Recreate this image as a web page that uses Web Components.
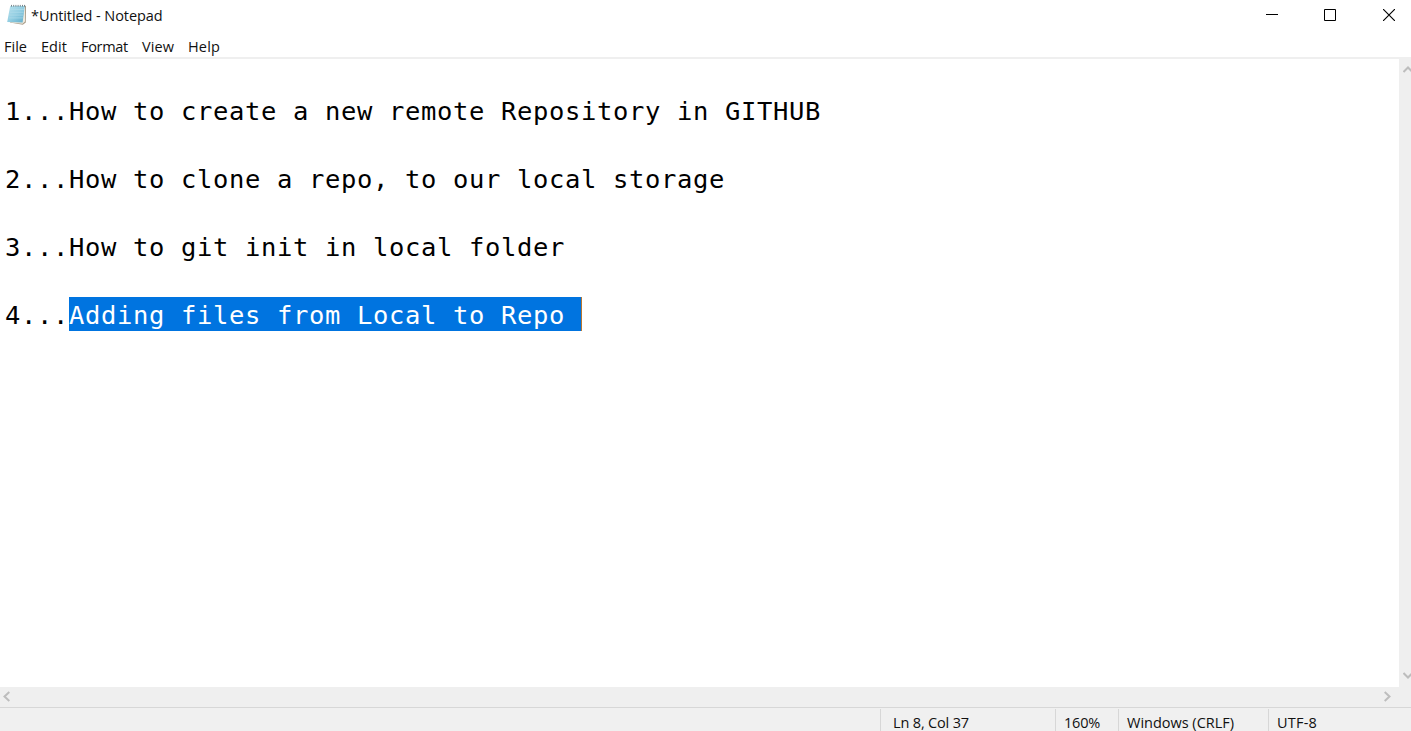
<!DOCTYPE html>
<html lang="en">
<head>
<meta charset="utf-8">
<title>*Untitled - Notepad</title>
<style>
html, body { margin: 0; height: 100%; overflow: hidden; background: #fff; }
body { font: 14.5px/20px "Open Sans", "Noto Sans", sans-serif; color: #111; }
</style>
</head>
<body>
<notepad-window></notepad-window>
<script>
const define = (name, html, setup) => customElements.define(name, class extends HTMLElement {
  constructor() {
    super();
    this.attachShadow({ mode: "open" }).innerHTML = html;
  }
  connectedCallback() { if (setup) setup(this); }
});

// A label whose letter spacing is tuned so that it takes the given width.
define("ui-label", `<style>:host{display:block;white-space:pre}span{display:inline-block}</style><span><slot></slot></span>`, el => {
  const span = el.shadowRoot.querySelector("span");
  const target = Number(el.getAttribute("width"));
  const gap = (target - span.getBoundingClientRect().width) / el.textContent.length;
  span.style.letterSpacing = gap.toFixed(3) + "px";
});

define("notepad-icon", `<style>:host{display:block;width:20px;height:22px}svg{display:block}</style>
<svg width="20" height="22" viewBox="0 0 20 22">
  <defs><linearGradient id="g" x1="0" y1="0" x2="1" y2="1"><stop offset="0" stop-color="#b9e2ee"/><stop offset=".5" stop-color="#93cee2"/><stop offset="1" stop-color="#5eabc9"/></linearGradient></defs>
  <path d="M3 18.6 15.8 20.7 18.8 18.6 19 2 17.4 1.5z" fill="#a89c89"/>
  <path d="M4 18.6 15.6 19.8 18 17.4V2.6z" fill="#eee9dd"/>
  <path d="M3.2 2H17.8L15.6 18.6.2 18z" fill="url(#g)"/>
  <path d="M3 5.5H17M2.6 8.3H16.6M2.2 11.1H16.3M1.8 13.9H15.9" stroke="#b4deeb" stroke-width=".6"/>
  <path d="M4.5.9v1.8M6.7.9v1.8M8.9.9v1.8M11.1.9v1.8M13.3.9v1.8M15.5.9v1.8M17.5.9v1.8" stroke="#75858b" stroke-width="1"/>
</svg>`);

define("title-bar", `<style>
:host{display:flex;height:32px;background:#fff}
notepad-icon{margin:4px 0 0 7px}
ui-label{margin:6px 0 0 4px;flex:1}
svg{display:block;margin-top:9px;flex:none;fill:none;stroke:#000}
.min{margin-right:46px}.max{margin-right:47px}.close{margin-right:16px}
</style>
<notepad-icon></notepad-icon><ui-label width="131.5">*Untitled - Notepad</ui-label>
<svg class="min" width="12" height="12"><path d="M0 5.5H12"/></svg>
<svg class="max" width="12" height="12"><path d="M.5.5H11.5V11.5H.5z"/></svg>
<svg class="close" width="12" height="12"><path d="M0 0 12 12M12 0 0 12" stroke-width="1.15"/></svg>`);

define("menu-bar", `<style>
:host{display:flex;box-sizing:border-box;height:27px;gap:14px;padding:5px 0 0 4px;border-bottom:2px solid #efefef;background:#fff}
</style>
<ui-label width="23">File</ui-label><ui-label width="26">Edit</ui-label><ui-label width="47">Format</ui-label><ui-label width="32">View</ui-label><ui-label width="32">Help</ui-label>`);

define("text-line", `<style>:host{display:block;height:34px;white-space:pre}</style><slot></slot>`);
define("text-selection", `<style>:host{display:inline-block;box-sizing:border-box;height:34px;vertical-align:top;background:#0074e0;color:#fff;border-right:1px solid #b97832}</style><slot></slot>`);

define("text-area", `<style>
:host{display:block;flex:1;min-width:0;padding-left:5px;background:#fff;color:#000;
font:25.5px/36px "DejaVu Sans Mono",monospace;letter-spacing:.648px}
</style>
<text-line></text-line>
<text-line>1...How to create a new remote Repository in GITHUB</text-line>
<text-line></text-line>
<text-line>2...How to clone a repo, to our local storage</text-line>
<text-line></text-line>
<text-line>3...How to git init in local folder</text-line>
<text-line></text-line>
<text-line>4...<text-selection>Adding files from Local to Repo </text-selection></text-line>`);

define("scroll-column", `<style>
:host{display:flex;flex-direction:column;justify-content:space-between;box-sizing:border-box;width:12px;padding:6px 0 7px 4px;background:#efefef;overflow:hidden}
svg{display:block;fill:none;stroke:#bdbdbd;stroke-width:2}
</style>
<svg width="10" height="8"><path d="M.5 7 5 2.5 9.5 7"/></svg>
<svg width="10" height="8"><path d="M.5 1 5 5.5 9.5 1"/></svg>`);

define("scroll-row", `<style>
:host{display:flex;justify-content:space-between;box-sizing:border-box;height:20px;padding:4px 19px 0 2px;background:#efefef}
svg{display:block;fill:none;stroke:#bdbdbd;stroke-width:2}
</style>
<svg width="9" height="11"><path d="M7.3 1 2.5 5.5 7.3 10"/></svg>
<svg width="9" height="11"><path d="M1.7 1 6.5 5.5 1.7 10"/></svg>`);

define("status-bar", `<style>
:host{display:flex;box-sizing:border-box;height:24px;border-top:1px solid #d7d7d7;background:#f0f0f0;overflow:hidden}
div{box-sizing:border-box;margin-top:1px;border-left:1px solid #d7d7d7;padding-top:4px}
.space{width:880px;border:0}.pos{width:175px;padding-left:12px}.zoom{width:63px;padding-left:8px}.eol{width:150px;padding-left:8px}.enc{flex:1;padding-left:8px}
</style>
<div class="space"></div>
<div class="pos"><ui-label width="76">Ln 8, Col 37</ui-label></div>
<div class="zoom"><ui-label width="36">160%</ui-label></div>
<div class="eol"><ui-label width="107">Windows (CRLF)</ui-label></div>
<div class="enc"><ui-label width="40">UTF-8</ui-label></div>`);

define("notepad-window", `<style>
:host{display:flex;flex-direction:column;width:1411px;height:731px;overflow:hidden}
main{display:flex;flex:1;min-height:0}
</style>
<title-bar></title-bar><menu-bar></menu-bar>
<main><text-area></text-area><scroll-column></scroll-column></main>
<scroll-row></scroll-row><status-bar></status-bar>`);
</script>
</body>
</html>
